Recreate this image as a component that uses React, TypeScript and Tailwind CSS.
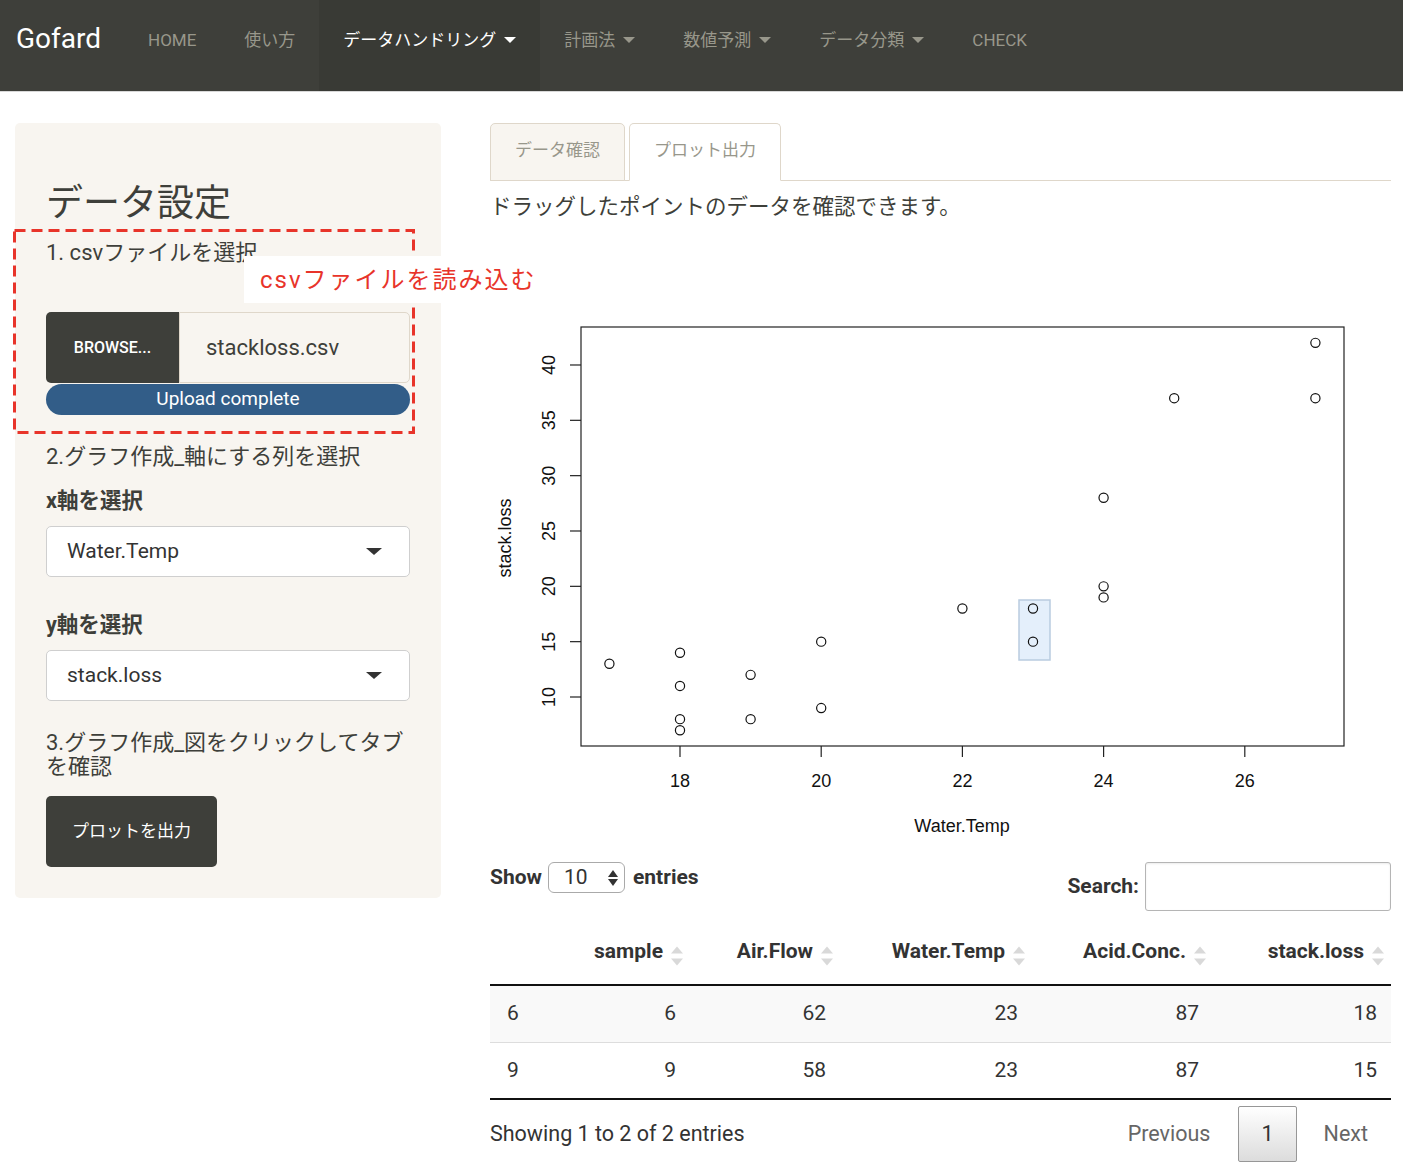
import React from "react";

type NavItem = { label: string; caret?: boolean; active?: boolean };

const navItems: NavItem[] = [
    { label: "HOME" },
    { label: "使い方" },
    { label: "データハンドリング", caret: true, active: true },
    { label: "計画法", caret: true },
    { label: "数値予測", caret: true },
    { label: "データ分類", caret: true },
    { label: "CHECK" },
];

// stackloss: Water.Temp / stack.loss
const points: [number, number][] = [
    [17, 13], [18, 14], [18, 11], [18, 8], [18, 7], [19, 12], [19, 8], [20, 15], [20, 9],
    [22, 18], [23, 18], [23, 15], [24, 28], [24, 20], [24, 19], [25, 37], [27, 42], [27, 37],
];

const sx = (v: number) => 190 + (v - 18) * 70.6;
const sy = (v: number) => 467 - (v - 10) * 11.067;

const rows = [
    ["6", "6", "62", "23", "87", "18"],
    ["9", "9", "58", "23", "87", "15"],
];

const columns = ["", "sample", "Air.Flow", "Water.Temp", "Acid.Conc.", "stack.loss"];
const colWidths = ["w-[100px]", "w-[100px]", "w-[150px]", "w-[192px]", "w-[181px]", "w-[178px]"];

const Caret = () => (
    <span className="ml-2 inline-block h-0 w-0 border-x-[6px] border-t-[6px] border-x-transparent border-t-current align-middle" />
);

const SortIcon = () => (
    <svg width="12" height="23" viewBox="0 0 12 23" className="absolute right-[7px] top-1/2 -translate-y-1/2">
        <polygon points="0,9 6,2 12,9" fill="#d9d9d9" />
        <polygon points="0,14 6,21 12,14" fill="#d9d9d9" />
    </svg>
);

const ScatterPlot = () => (
    <svg width="901" height="627" viewBox="0 0 901 627" className="block">
        <rect x="529" y="370" width="31" height="60" fill="#e4effb" stroke="#b9cce0" strokeWidth="1.5" />
        <rect x="91" y="97" width="763" height="419" fill="none" stroke="#222" strokeWidth="1.2" />
        {[18, 20, 22, 24, 26].map((v) => (
            <g key={v}>
                <line x1={sx(v)} y1="516" x2={sx(v)} y2="527" stroke="#222" strokeWidth="1.2" />
                <text x={sx(v)} y="557" textAnchor="middle" fontSize="18" fontFamily="Liberation Sans, Arial, sans-serif" fill="#111">
                    {v}
                </text>
            </g>
        ))}
        {[10, 15, 20, 25, 30, 35, 40].map((v) => (
            <g key={v}>
                <line x1="80" y1={sy(v)} x2="91" y2={sy(v)} stroke="#222" strokeWidth="1.2" />
                <text
                    transform={`translate(64.5,${sy(v)}) rotate(-90)`}
                    textAnchor="middle"
                    fontSize="18"
                    fontFamily="Liberation Sans, Arial, sans-serif"
                    fill="#111"
                >
                    {v}
                </text>
            </g>
        ))}
        <text x="472" y="602" textAnchor="middle" fontSize="18" fontFamily="Liberation Sans, Arial, sans-serif" fill="#111">
            Water.Temp
        </text>
        <text
            transform="translate(20.5,308) rotate(-90)"
            textAnchor="middle"
            fontSize="18"
            fontFamily="Liberation Sans, Arial, sans-serif"
            fill="#111"
        >
            stack.loss
        </text>
        {points.map(([x, y], i) => (
            <circle key={i} cx={sx(x)} cy={sy(y)} r="4.6" fill="none" stroke="#111" strokeWidth="1.2" />
        ))}
    </svg>
);

export default function App() {
    return (
        <div className="min-h-screen bg-white font-['Roboto','Noto_Sans_CJK_JP',sans-serif] text-[#3e3f3a]">
            {/* navbar */}
            <nav className="flex h-[92px] items-start border-b border-[#d8d8d8] bg-[#3e3f3a]">
                <div className="px-4 pt-[21px] text-[28px] leading-[36px] text-white">Gofard</div>
                <ul className="ml-[7px] flex h-full">
                    {navItems.map((item) => (
                        <li
                            key={item.label}
                            className={`flex h-full items-start px-6 pt-[28px] text-[17px] leading-[24px] ${
                                item.active ? "bg-[#393a35] text-white" : "text-[#98978b]"
                            }`}
                        >
                            <span className="flex items-center">
                                {item.label}
                                {item.caret && <Caret />}
                            </span>
                        </li>
                    ))}
                </ul>
            </nav>

            <div className="flex items-start pl-[15px] pt-[31px]">
                {/* sidebar */}
                <div className="relative w-[426px] shrink-0 rounded-[5px] bg-[#f8f5f0] px-[31px] pb-[31px] pt-[60px]">
                    <h2 className="text-[37px] leading-[41px]">データ設定</h2>
                    <div className="mt-4 text-[22px] leading-[26px]">1. csvファイルを選択</div>

                    <div className="mt-[46px] flex h-[71px]">
                        <div className="flex w-[133px] items-center justify-center rounded-l-[5px] bg-[#3e3f3a] text-[16px] font-medium text-white">
                            BROWSE...
                        </div>
                        <div className="flex flex-1 items-center rounded-r-[5px] border border-[#dfd7ca] bg-[#f8f5f0] pl-[26px] text-[22px]">
                            stackloss.csv
                        </div>
                    </div>
                    <div className="mt-px flex h-[31px] items-center justify-center rounded-full bg-[#325d88] text-[19px] text-white">
                        Upload complete
                    </div>

                    <div className="mt-[29px] text-[22px] leading-[26px]">2.グラフ作成_軸にする列を選択</div>

                    <div className="mt-[18px] text-[21.5px] font-bold leading-[26px]">x軸を選択</div>
                    <div className="mt-3 flex h-[51px] items-center justify-between rounded-[5px] border border-[#cfcfcf] bg-white pl-5 pr-[27px] text-[21px] text-[#333]">
                        <span>Water.Temp</span>
                        <span className="h-0 w-0 border-x-[8px] border-t-[7px] border-x-transparent border-t-[#333]" />
                    </div>

                    <div className="mt-[35px] text-[21.5px] font-bold leading-[26px]">y軸を選択</div>
                    <div className="mt-3 flex h-[51px] items-center justify-between rounded-[5px] border border-[#cfcfcf] bg-white pl-5 pr-[27px] text-[21px] text-[#333]">
                        <span>stack.loss</span>
                        <span className="h-0 w-0 border-x-[8px] border-t-[7px] border-x-transparent border-t-[#333]" />
                    </div>

                    <div className="mt-[30px] text-[22px] leading-[24px]">3.グラフ作成_図をクリックしてタブを確認</div>

                    <button className="mt-[17px] h-[71px] rounded-[5px] bg-[#3e3f3a] px-[26px] text-[17px] text-white">
                        プロットを出力
                    </button>

                    {/* annotation */}
                    <svg width="404" height="207" className="absolute left-[-3px] top-[105px]">
                        <rect x="2.5" y="2.5" width="399" height="202" fill="none" stroke="#e8342a" strokeWidth="3" strokeDasharray="11 6" />
                    </svg>
                    <div className="absolute left-[229px] top-[133px] flex h-[47px] w-[310px] items-center bg-white pl-4 text-[24px] tracking-[2px] text-[#e8342a]">
                        csvファイルを読み込む
                    </div>
                </div>

                {/* main */}
                <div className="ml-[49px] w-[901px]">
                    <div className="flex border-b border-[#dfd7ca]">
                        <div className="-mb-px h-[58px] rounded-t-[5px] border border-[#dfd7ca] bg-[#f8f5f0] px-6 pt-[14px] text-[17px] leading-[24px] text-[#98978b]">
                            データ確認
                        </div>
                        <div className="-mb-px ml-[4px] h-[58px] rounded-t-[5px] border border-[#dfd7ca] border-b-white bg-white px-6 pt-[14px] text-[17px] leading-[24px] text-[#98978b]">
                            プロット出力
                        </div>
                    </div>
                    <p className="mt-[13px] text-[21.5px] leading-[26px]">ドラッグしたポイントのデータを確認できます。</p>

                    <div className="mt-[10px]">
                        <ScatterPlot />
                    </div>

                    <div className="mt-[5px] flex items-start justify-between text-[#333]">
                        <div className="flex h-[31px] items-center text-[21px] font-bold">
                            <span>Show</span>
                            <div className="ml-[6px] flex h-[31px] w-[77px] items-center justify-between rounded-[6px] border border-[#aaa] pl-[15px] pr-[6px] font-normal">
                                <span className="text-[21px]">10</span>
                                <span className="flex flex-col items-center gap-[2px]">
                                    <span className="h-0 w-0 border-x-[5px] border-b-[7px] border-x-transparent border-b-[#333]" />
                                    <span className="h-0 w-0 border-x-[5px] border-t-[7px] border-x-transparent border-t-[#333]" />
                                </span>
                            </div>
                            <span className="ml-2">entries</span>
                        </div>
                        <div className="flex h-[49px] items-center text-[21px] font-bold">
                            <span>Search:</span>
                            <div className="ml-[6px] h-[49px] w-[246px] rounded-[3px] border border-[#b5b5b5] bg-white shadow-[inset_0_1px_2px_rgba(0,0,0,0.08)]" />
                        </div>
                    </div>

                    <table className="mt-4 w-full table-fixed border-collapse text-[21px] text-[#333]">
                        <colgroup>
                            {colWidths.map((w, i) => (
                                <col key={i} className={w} />
                            ))}
                        </colgroup>
                        <thead>
                            <tr className="border-b-2 border-[#111]">
                                {columns.map((c, i) => (
                                    <th key={i} className="relative pb-[21px] pr-[27px] pt-3 text-right font-bold leading-[24px]">
                                        {c}
                                        {c && <SortIcon />}
                                    </th>
                                ))}
                            </tr>
                        </thead>
                        <tbody>
                            {rows.map((r, ri) => (
                                <tr
                                    key={ri}
                                    className={`h-[57px] ${ri === 0 ? "bg-[#f9f9f9]" : "border-t border-[#ddd] bg-white"} ${
                                        ri === rows.length - 1 ? "border-b-2 border-b-[#111]" : ""
                                    }`}
                                >
                                    {r.map((v, ci) => (
                                        <td key={ci} className={ci === 0 ? "pl-[17px] text-left" : "pr-[14px] text-right"}>
                                            {v}
                                        </td>
                                    ))}
                                </tr>
                            ))}
                        </tbody>
                    </table>

                    <div className="flex items-start justify-between pt-[6px] text-[21.5px] text-[#333]">
                        <div className="flex h-[56px] items-center">Showing 1 to 2 of 2 entries</div>
                        <div className="flex items-center">
                            <span className="flex h-[56px] items-center px-[23px] text-[#666]">Previous</span>
                            <span className="ml-[5px] flex h-[56px] items-center rounded-[2px] border border-[#979797] bg-gradient-to-b from-white to-[#dcdcdc] px-[22px]">
                                1
                            </span>
                            <span className="ml-[4px] flex h-[56px] items-center px-[23px] text-[#666]">Next</span>
                        </div>
                    </div>
                </div>
            </div>
        </div>
    );
}
